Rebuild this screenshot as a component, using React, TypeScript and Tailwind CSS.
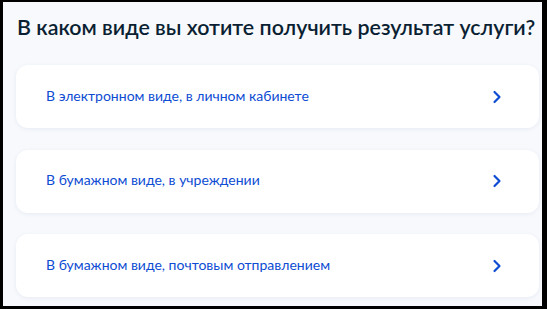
import { ChevronRight } from 'lucide-react'

const OPTIONS = [
  'В электронном виде, в личном кабинете',
  'В бумажном виде, в учреждении',
  'В бумажном виде, почтовым отправлением',
]

export default function App() {
  return (
    <div className="w-[547px] h-[309px] bg-black pt-[2px] pl-[3px] pr-[5px] pb-[3px]" style={{ fontFamily: 'Lato, "Noto Sans", sans-serif' }}>
      <div className="h-full bg-[#f7f9fc] pl-[13px] pr-[3px] overflow-hidden">
        <h1 className="pt-[11px] pl-[1px] text-[21.4px] leading-[29px] font-semibold text-[#0b1f33] whitespace-nowrap">
          В каком виде вы хотите получить результат услуги?
        </h1>
        <div className="mt-[23px] flex flex-col gap-[21.5px]">
          {OPTIONS.map((label) => (
            <button
              key={label}
              className="h-[63px] w-full bg-white rounded-[12px] shadow-[0_1px_4px_rgba(40,70,140,0.08)] flex items-center justify-between pl-[30px] pr-[32px] text-left"
            >
              <span className="text-[14px] leading-[20px] text-[#0d4cd3] -mt-[2px]">{label}</span>
              <ChevronRight className="w-[20px] h-[20px] text-[#0d4cd3]" strokeWidth={2.6} />
            </button>
          ))}
        </div>
      </div>
    </div>
  )
}
